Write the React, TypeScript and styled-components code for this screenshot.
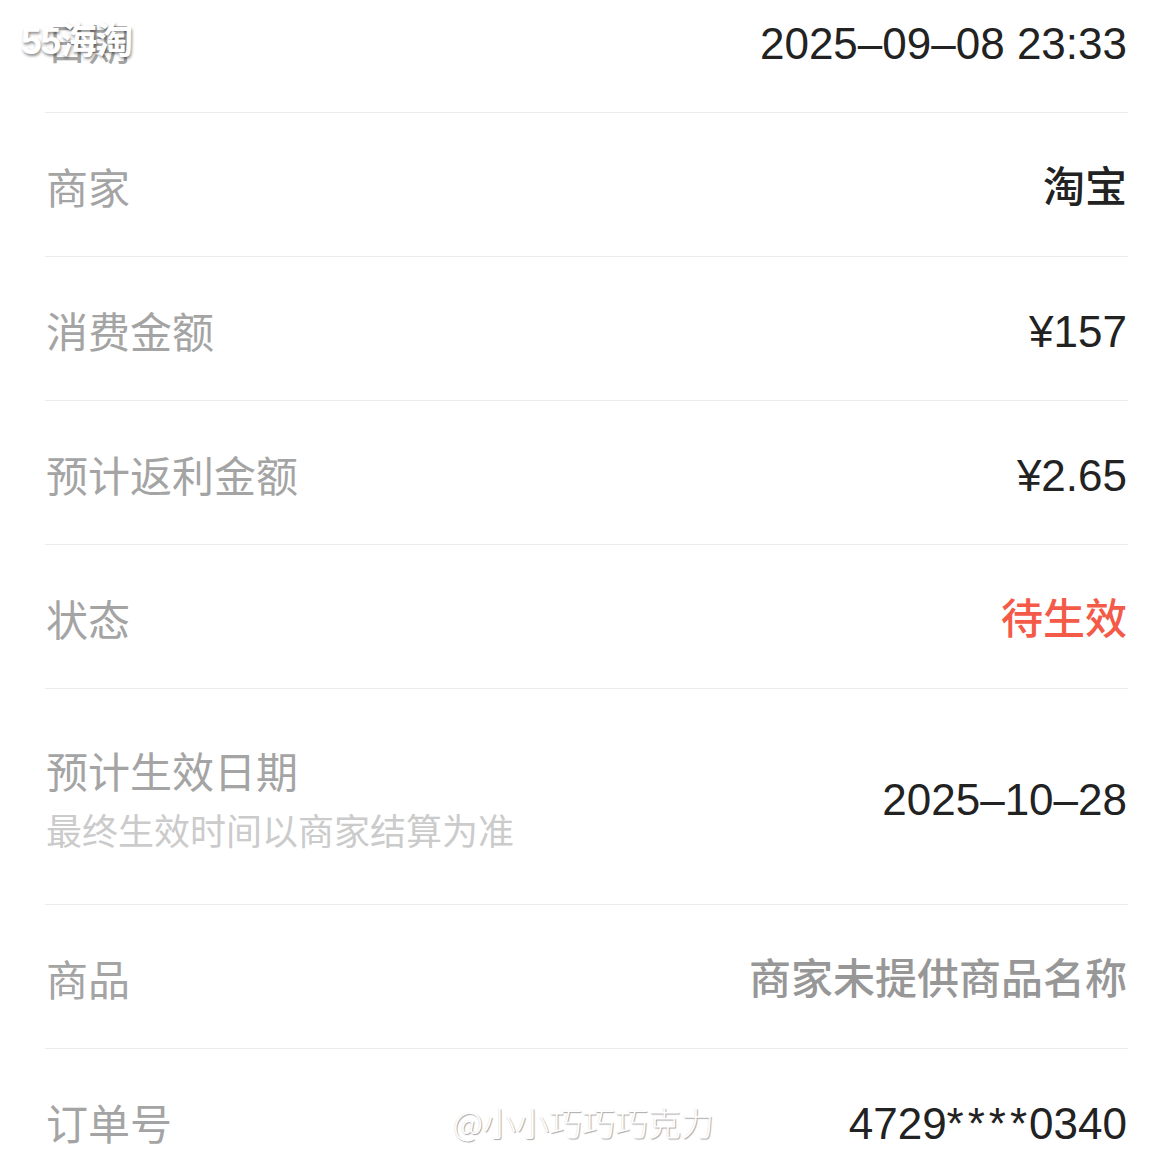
import React from 'react';
import styled, { createGlobalStyle } from 'styled-components';

const GlobalStyle = createGlobalStyle`
  html, body {
    margin: 0;
    padding: 0;
    background: #ffffff;
  }
  body {
    font-family: "Liberation Sans", "Noto Sans CJK SC", sans-serif;
    -webkit-font-smoothing: antialiased;
  }
`;

type Tone = 'dark' | 'muted' | 'alert';

interface DetailItem {
  label: string;
  hint?: string;
  value: string;
  tone?: Tone;
}

const items: DetailItem[] = [
  { label: '日期', value: '2025–09–08 23:33' },
  { label: '商家', value: '淘宝' },
  { label: '消费金额', value: '¥157' },
  { label: '预计返利金额', value: '¥2.65' },
  { label: '状态', value: '待生效', tone: 'alert' },
  { label: '预计生效日期', hint: '最终生效时间以商家结算为准', value: '2025–10–28' },
  { label: '商品', value: '商家未提供商品名称', tone: 'muted' },
  { label: '订单号', value: '4729****0340' },
];

const toneColor: Record<Tone, string> = {
  dark: '#222222',
  muted: '#979797',
  alert: '#f45a48',
};

const isCjk = (s: string) => /[\u4e00-\u9fff]/.test(s);

// masked digits in the order number are drawn a bit wider
const renderValue = (s: string) =>
  s.split(/(\*+)/).map((part, i) =>
    part.startsWith('*') ? <Mask key={i}>{part}</Mask> : <React.Fragment key={i}>{part}</React.Fragment>
  );

const App: React.FC = () => {
  return (
    <>
      <GlobalStyle />
      <Screen>
        <DetailList>
          {items.map((item) => (
            <Row key={item.label} $tall={!!item.hint}>
              <LabelBlock>
                <Label>{item.label}</Label>
                {item.hint && <Hint>{item.hint}</Hint>}
              </LabelBlock>
              <Value $tone={item.tone || 'dark'} $cjk={isCjk(item.value)}>
                {renderValue(item.value)}
              </Value>
            </Row>
          ))}
        </DetailList>
        <BrandMark>55海淘</BrandMark>
        <UserMark>@小小巧巧巧克力</UserMark>
      </Screen>
    </>
  );
};

const Screen = styled.div`
  position: relative;
  width: 1173px;
  height: 1173px;
  overflow: hidden;
  background: #ffffff;
`;

const DetailList = styled.div`
  display: flex;
  flex-direction: column;
  padding: 0 45px;
  /* list is scrolled: first row partly hidden above the top edge */
  margin-top: -31px;
`;

const Row = styled.div<{ $tall: boolean }>`
  display: flex;
  align-items: center;
  justify-content: space-between;
  box-sizing: border-box;
  height: ${(p) => (p.$tall ? '216px' : '144px')};
  padding-top: ${(p) => (p.$tall ? '2px' : '3px')};
  border-bottom: 1px solid #ececec;
`;

const LabelBlock = styled.div`
  display: flex;
  flex-direction: column;
  padding-left: 1px;
`;

const Label = styled.div`
  font-family: "Noto Sans CJK SC", sans-serif;
  font-size: 42px;
  line-height: 50px;
  color: #a4a4a4;
  font-weight: 400;
`;

const Hint = styled.div`
  margin-top: 12px;
  font-family: "Noto Sans CJK SC", sans-serif;
  font-size: 36px;
  line-height: 44px;
  color: #cbcbcb;
  font-weight: 400;
`;

const Value = styled.div<{ $tone: Tone; $cjk: boolean }>`
  font-family: "Liberation Sans", "Noto Sans CJK SC", sans-serif;
  font-size: ${(p) => (p.$cjk ? '42px' : '44px')};
  line-height: 52px;
  font-weight: 500;
  color: ${(p) => toneColor[p.$tone]};
  white-space: nowrap;
  padding-top: 4px;
  padding-right: 1px;
`;

const Mask = styled.span`
  letter-spacing: 4px;
  margin-right: -2px;
`;

const BrandMark = styled.div`
  position: absolute;
  left: 21px;
  top: 19px;
  font-family: "Liberation Sans", "Noto Sans CJK SC", sans-serif;
  font-size: 37px;
  line-height: 46px;
  font-weight: 700;
  color: #ffffff;
  letter-spacing: -1px;
  text-shadow: 1px 2px 3px rgba(0, 0, 0, 0.45);
`;

const UserMark = styled.div`
  position: absolute;
  left: 453px;
  top: 1100px;
  font-family: "Noto Sans CJK SC", sans-serif;
  font-size: 33px;
  line-height: 44px;
  font-weight: 300;
  color: #ffffff;
  text-shadow: 1px 1px 1px rgba(0, 0, 0, 0.35), -1px 0 0 rgba(0, 0, 0, 0.08);
`;

export default App;
